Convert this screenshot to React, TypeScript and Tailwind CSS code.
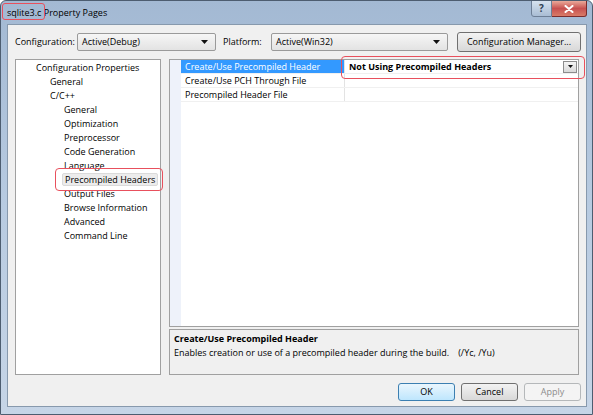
import { ReactNode } from 'react'

const font = "font-['Open_Sans','Noto_Sans',sans-serif]"

function Arrow() {
  return (
    <svg width="7" height="4" viewBox="0 0 7 4" className="shrink-0">
      <path d="M0 0h7L3.5 4z" fill="#111" />
    </svg>
  )
}

function Combo({ value, width }: { value: string, width: string }) {
  return (
    <div className={`${width} h-[18px] flex items-center justify-between pl-[4px] pr-[7px] rounded-[2px] border border-[#9a9a9a] bg-gradient-to-b from-[#f6f6f6] to-[#e3e3e3]`}>
      <span>{value}</span>
      <Arrow />
    </div>
  )
}

function Btn({ children, width, kind = 'normal' }: { children: ReactNode, width: string, kind?: 'normal' | 'default' | 'disabled' }) {
  const styles = {
    normal: 'border-[#707070] from-[#f3f3f3] to-[#d8d8d8] text-black',
    default: 'border-[#3c7fb1] from-[#eaf6fd] to-[#bee6fd] text-black',
    disabled: 'border-[#b5b8ba] from-[#f4f4f4] to-[#f4f4f4] text-[#8c8c8c]',
  }[kind]
  return (
    <div className={`${width} h-[18px] flex items-center justify-center rounded-[3px] border bg-gradient-to-b ${styles}`}>
      {children}
    </div>
  )
}

const tree: { label: string, level: number, selected?: boolean }[] = [
  { label: 'Configuration Properties', level: 0 },
  { label: 'General', level: 1 },
  { label: 'C/C++', level: 1 },
  { label: 'General', level: 2 },
  { label: 'Optimization', level: 2 },
  { label: 'Preprocessor', level: 2 },
  { label: 'Code Generation', level: 2 },
  { label: 'Language', level: 2 },
  { label: 'Precompiled Headers', level: 2, selected: true },
  { label: 'Output Files', level: 2 },
  { label: 'Browse Information', level: 2 },
  { label: 'Advanced', level: 2 },
  { label: 'Command Line', level: 2 },
]

const indent = ['pl-[20px]', 'pl-[34px]', 'pl-[48px]']

const rows = [
  { name: 'Create/Use Precompiled Header', value: 'Not Using Precompiled Headers', selected: true },
  { name: 'Create/Use PCH Through File', value: '' },
  { name: 'Precompiled Header File', value: '' },
]

export default function App() {
  return (
    <div className={`${font} text-[9px] text-black w-[593px] h-[415px] flex flex-col bg-gradient-to-b from-[#a3b9d3] via-[#b8cbe1] to-[#c6d5e7] border border-[#4d5d70] rounded-t-[6px] overflow-hidden`}>
      {/* title bar */}
      <div className="h-[23px] flex items-start justify-between shrink-0">
        <div className="relative mt-[5px] ml-[6px]">
          sqlite3.c Property Pages
          <div className="absolute -left-[5px] -top-[3px] w-[43px] h-[17px] border border-[#e8505d] rounded-[3px]" />
        </div>
        <div className="flex mr-[5px] -mt-px">
          <div className="w-[21px] h-[17px] flex items-center justify-center rounded-bl-[3px] border border-[#6d7f96] bg-gradient-to-b from-[#d6e2ef] to-[#a9bdd4] text-[#2f3e52] text-[10px] font-bold">?</div>
          <div className="w-[35px] h-[17px] flex items-center justify-center rounded-br-[3px] border border-l-0 border-[#7a2c2c] bg-gradient-to-b from-[#e9a99a] via-[#c75050] to-[#d97b67]">
            <svg width="10" height="8" viewBox="0 0 10 8">
              <path d="M1.5 1l7 6M8.5 1l-7 6" stroke="#fff" strokeWidth="2" strokeLinecap="round" />
            </svg>
          </div>
        </div>
      </div>

      {/* client area */}
      <div className="ml-[6px] w-[580px] h-[383px] bg-[#f0f0f0] border border-[#8799ad] flex flex-col shrink-0">
        <div className="mt-[7px] h-[20px] flex items-center pl-[7px]">
          <span className="w-[62px]">Configuration:</span>
          <Combo value="Active(Debug)" width="w-[139px]" />
          <span className="ml-[7px] w-[48px]">Platform:</span>
          <Combo value="Active(Win32)" width="w-[177px]" />
          <div className="ml-[9px] w-[124px] h-[20px] flex items-center justify-center rounded-[3px] border border-[#707070] bg-gradient-to-b from-[#f3f3f3] to-[#d8d8d8]">
            Configuration Manager...
          </div>
        </div>

        <div className="mt-[7px] h-[316px] flex pl-[7px]">
          {/* tree */}
          <div className="w-[146px] h-full bg-white border border-[#a0a0a0] pt-px">
            {tree.map((t, i) => (
              <div key={i} className={`h-[14px] leading-[14px] ${indent[t.level]}`}>
                {t.selected ? (
                  <span className="relative inline-block px-[2px] -ml-[2px] leading-[11px] bg-[#ececec] border border-[#dadada] rounded-[2px]">
                    {t.label}
                    <span className="absolute -left-[8px] -top-[6px] w-[108px] h-[23px] border border-[#e8505d] rounded-[4px]" />
                  </span>
                ) : t.label}
              </div>
            ))}
          </div>

          {/* right column */}
          <div className="ml-[8px] w-[410px] h-full flex flex-col">
            <div className="relative h-[268px] bg-white border border-[#a0a0a0] flex">
              <div className="w-[11px] h-full bg-[#eef2fa]" />
              <div className="flex-1">
                {rows.map((r, i) => (
                  <div key={i} className="h-[14px] flex border-b border-[#f0f0f0]">
                    <div className={`w-[164px] pl-[4px] leading-[14px] border-r border-[#e3e3e3] ${r.selected ? 'bg-[#3399ff] text-white' : ''}`}>
                      {r.name}
                    </div>
                    <div className="flex-1 flex items-center justify-between pl-[4px] pr-px">
                      <span className="font-bold">{r.value}</span>
                      {r.selected && (
                        <div className="w-[14px] h-[12px] flex items-center justify-center border border-[#8c8c8c] bg-gradient-to-b from-[#f4f4f4] to-[#d9d9d9]">
                          <svg width="5" height="3" viewBox="0 0 5 3"><path d="M0 0h5L2.5 3z" fill="#111" /></svg>
                        </div>
                      )}
                    </div>
                  </div>
                ))}
              </div>
              <div className="absolute left-[171px] -top-[4px] w-[244px] h-[23px] border border-[#e8505d] rounded-[4px]" />
            </div>
            <div className="mt-[2px] h-[46px] bg-[#f0f0f0] border border-[#a0a0a0] pt-[2px] pl-[4px] leading-[14px]">
              <div className="font-bold">Create/Use Precompiled Header</div>
              <div>
                Enables creation or use of a precompiled header during the build.
                <span className="ml-[9px]">(/Yc, /Yu)</span>
              </div>
            </div>
          </div>
        </div>

        <div className="mt-[8px] flex justify-end gap-[6px] pr-[5px]">
          <Btn width="w-[57px]" kind="default">OK</Btn>
          <Btn width="w-[57px]">Cancel</Btn>
          <Btn width="w-[57px]" kind="disabled">Apply</Btn>
        </div>
      </div>
    </div>
  )
}
